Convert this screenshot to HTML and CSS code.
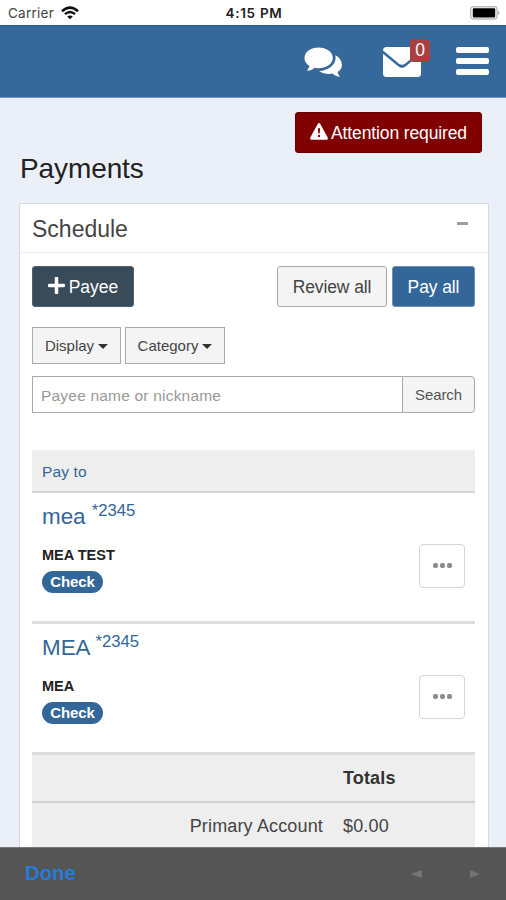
FILE: index.html
```html
<!DOCTYPE html>
<html lang="en">
<head>
<meta charset="utf-8">
<title>Payments</title>
<link rel="stylesheet" href="styles.css">
</head>
<body>
<div class="app">
  <div class="status">
    <div class="carrier"><span>Carrier</span>
      <svg width="18" height="14" viewBox="0 0 18 14"><path d="M1 5.2Q9-2 17 5.2" fill="none" stroke="#111" stroke-width="2.5"/><path d="M3.9 8.2Q9 3.8 14.1 8.2" fill="none" stroke="#111" stroke-width="2.3"/><path d="M6.2 10.5Q9 8.3 11.8 10.5L9 13.3Z" fill="#111"/></svg>
    </div>
    <div class="time">4:15 PM</div>
    <div class="battery"><svg width="30" height="14" viewBox="0 0 30 14"><rect x=".7" y=".7" width="26.3" height="12.3" rx="2.5" fill="#fff" stroke="#bbb" stroke-width="1.4"/><rect x="2.8" y="2.2" width="22.4" height="9.4" rx="1" fill="#000"/><path d="M28 4.5Q31 6.8 28 9Z" fill="#aaa"/></svg></div>
  </div>
  <header class="header">
    <svg class="chat" width="38" height="31" viewBox="0 0 38 31" fill="#fff"><path d="M14.5.5C6.800.500.500 5 .5 11c0 3.300 1.900 6.200 5 8.100C5 21 4 22.400 2.800 23.800c3.200 0 5.900-1.200 7.800-3 1.300.3 2.600.4 3.900.4 7.900 0 14.300-4.600 14.300-10.300S22.400.500 14.500.5Z"/><path d="M31.300 8.300c.3 1 .3 1.900.3 2.700 0 7-7.300 12.700-16.500 13 2.600 1.900 6.100 3 10 3 1 0 2.200-.1 3.200-.4 2.200 2 4.500 3.100 7.800 3.100-1.200-1.300-2-2.800-2.500-4.700 2.900-1.800 4.500-4.400 4.300-7.300-.1-3.900-2.500-7.300-6.600-9.400Z"/></svg>
    <div class="mail">
      <svg width="38" height="30" viewBox="0 0 38 30" fill="#fff"><path d="M0 3.500Q0 0 3.500 0h31Q38 0 38 3.500L22.300 16.500Q19 19.200 15.700 16.500L0 3.500Z"/><path d="M0 6.700 15.200 19.200Q19 22.200 22.800 19.200L38 6.700V26.500Q38 30 34.500 30h-31Q0 30 0 26.500Z"/></svg>
      <span class="count">0</span>
    </div>
    <div class="menu"><i></i><i></i><i></i></div>
  </header>
  <main class="main">
    <div class="alert-row"><button class="btn danger"><svg width="18" height="17" viewBox="0 0 18 17"><path d="M7.700.900Q9-.900 10.300.900L17.700 14.500Q18.300 16.500 16.500 16.700h-15Q-.300 16.500.300 14.500Z" fill="#fff"/><path d="M7.900 5.200h2.200l-.4 5.300H8.300ZM8 11.900h2v2H8Z" fill="#800000"/></svg><span>Attention required</span></button></div>
    <h1>Payments</h1>
    <section class="panel">
      <div class="panel-head"><h2>Schedule</h2><i class="collapse"></i></div>
      <div class="panel-body">
        <div class="actions">
          <button class="btn dark"><svg width="17" height="17" viewBox="0 0 17 17"><path d="M8.500 1.300V15.700M1.300 8.500H15.700" stroke="#fff" stroke-width="3.500" stroke-linecap="round"/></svg><span>Payee</span></button>
          <button class="btn light"><span>Review all</span></button>
          <button class="btn blue"><span>Pay all</span></button>
        </div>
        <div class="filters">
          <button class="filter display">Display<i></i></button>
          <button class="filter category">Category<i></i></button>
        </div>
        <div class="search"><div class="field"><span>Payee name or nickname</span></div><button>Search</button></div>
        <div class="list">
          <div class="list-head">Pay to</div>
          <div class="row">
            <div class="payee"><a class="name">mea <sup>*2345</sup></a><b class="nick">MEA TEST</b><span class="pill">Check</span></div>
            <button class="more"><i></i><i></i><i></i></button>
          </div>
          <div class="row">
            <div class="payee"><a class="name">MEA <sup>*2345</sup></a><b class="nick">MEA</b><span class="pill">Check</span></div>
            <button class="more"><i></i><i></i><i></i></button>
          </div>
          <div class="totals head"><span></span><b>Totals</b></div>
          <div class="totals"><span>Primary Account</span><span>$0.00</span></div>
        </div>
      </div>
    </section>
  </main>
  <footer class="toolbar"><a>Done</a><svg width="70" height="10" viewBox="0 0 70 10" fill="#737373"><path d="M0 5 12 1V9ZM60 1 70 5 60 9Z"/></svg></footer>
</div>
</body>
</html>
```
FILE: styles.css
```css
* { box-sizing: border-box; }
body { margin: 0; font-family: "Liberation Sans", Arial, sans-serif; color: #333; }
button { font-family: inherit; margin: 0; padding: 0; white-space: nowrap; }
svg { display: block; flex: none; }
h1, h2 { margin: 0; font-weight: 400; }

.app { height: 900px; width: 506px; display: flex; flex-direction: column; overflow: hidden; background: #ebeff7; }

.status { height: 25px; flex: none; background: #fff; display: grid; grid-template-columns: 1fr auto 1fr; align-items: center; padding: 1px 6px 0 8px; font-family: Inter, sans-serif; }
.carrier { display: flex; align-items: center; gap: 7px; font-size: 13.5px; color: #444; letter-spacing: .25px; }
.carrier svg { margin-top: -1px; }
.time { font-size: 13.5px; font-weight: 600; color: #222; letter-spacing: .7px; }
.battery { justify-self: end; }

.header { height: 73px; flex: none; background: #35699b; border-top: 1px solid #285b8b; border-bottom: 1px solid #6f93b8; display: flex; justify-content: flex-end; align-items: flex-start; padding: 21px 17px 0 0; }
.chat { margin-right: 41px; }
.mail { position: relative; margin-right: 35px; }
.count { position: absolute; left: 27px; top: -8px; width: 20px; height: 23px; border-radius: 3px; background: #a94040; color: #fff; font-size: 17.5px; line-height: 23px; text-align: center; }
.menu { width: 33px; display: flex; flex-direction: column; gap: 5px; }
.menu i { height: 6px; border-radius: 2px; background: #fff; }

.main { flex: 1; min-height: 0; overflow: hidden; padding: 14px 17px 0 19px; }
.alert-row { display: flex; justify-content: flex-end; margin-right: 7px; }
.btn { height: 41px; border-radius: 3px; border: 1px solid; font-size: 17.5px; display: flex; align-items: center; justify-content: center; padding-top: 2px; }
.danger { width: 187px; background: #800000; border-color: #6c0000; color: #fff; gap: 3px; letter-spacing: -.12px; }
.danger svg { margin-top: -4px; }
h1 { font-size: 28px; line-height: 32px; height: 50px; color: #222; padding-left: 1px; letter-spacing: -.1px; }

.panel { width: 470px; background: #fff; border: 1px solid #d3d7df; border-radius: 2px; height: 800px; }
.panel-head { height: 49px; border-bottom: 1px solid #eee; display: flex; justify-content: space-between; padding: 0 20px 0 12px; }
h2 { font-size: 23px; line-height: 50px; color: #444; }
.collapse { width: 11px; height: 3px; background: #9b9da9; margin-top: 18px; }
.panel-body { padding: 13px 13px 0 12px; }
.actions { display: flex; margin-bottom: 20px; }
.dark { width: 102px; background: #394b59; border-color: #53616d; color: #fff; gap: 4px; margin-right: auto; }
.dark svg { margin-top: -5px; }
.light { width: 110px; background: #f4f4f4; border-color: #aaa; color: #444; margin-right: 5px; letter-spacing: -.1px; }
.blue { width: 83px; background: #336699; border-color: #7590ac; color: #fff; letter-spacing: -.1px; }
.filters { display: flex; gap: 4px; margin-bottom: 12px; }
.filter { height: 37px; background: #f4f4f4; border: 1px solid #aaa; font-size: 15px; color: #444; display: flex; align-items: center; justify-content: center; gap: 4px; }
.filter i { border: 5px solid transparent; border-top-color: #333; border-bottom: 0; margin-top: 2px; }
.display { width: 89px; }
.category { width: 100px; }
.search { display: flex; height: 37px; }
.field { flex: 1; border: 1px solid #aaa; border-right: 0; border-radius: 1px 0 0 1px; padding-left: 8px; font-size: 15.5px; line-height: 37px; color: #999; letter-spacing: .2px; }
.search button { width: 73px; border: 1px solid #aaa; border-radius: 0 4px 4px 0; background: #f4f4f4; color: #555; font-size: 15px; letter-spacing: -.1px; }

.list { margin-top: 37px; }
.list-head { height: 43px; background: #eee; border-bottom: 2px solid #d5d5d5; padding-left: 10px; font-size: 15.5px; line-height: 43px; color: #336699; letter-spacing: .15px; }
.row { height: 131px; border-bottom: 3px solid #ddd; display: flex; justify-content: space-between; padding: 7px 10px 0; }
.payee { display: flex; flex-direction: column; align-items: flex-start; }
.name { font-size: 22.4px; line-height: 34px; height: 46px; color: #336699; white-space: nowrap; }
.name sup { font-size: 16.7px; line-height: 0; vertical-align: 8px; }
.nick { font-size: 14.5px; line-height: 18px; color: #222; margin-bottom: 7px; }
.pill { width: 61px; height: 22px; border-radius: 11px; background: #336699; color: #fff; font-weight: 700; font-size: 15px; line-height: 22px; text-align: center; letter-spacing: -.1px; }
.more { width: 46px; height: 44px; margin-top: 44px; border: 1px solid #d5d5d5; border-radius: 4px; background: #fff; display: flex; align-items: center; justify-content: center; gap: 2px; padding-bottom: 2px; }
.more i { width: 5px; height: 5px; border-radius: 2px; background: #8b8b8b; }
.totals { height: 48px; background: #eee; border-bottom: 2px solid #d0d0d0; display: grid; grid-template-columns: 291px 1fr; column-gap: 20px; font-size: 18px; line-height: 47px; color: #444; letter-spacing: .15px; }
.totals span:first-child { text-align: right; }
.totals b { color: #333; }

.toolbar { height: 53px; flex: none; background: #555; border-top: 1px solid #777; display: flex; justify-content: space-between; align-items: center; padding: 0 26px 0 25px; }
.toolbar a { color: #267bd8; font-weight: 700; font-size: 20.3px; padding-bottom: 1px; }
```
